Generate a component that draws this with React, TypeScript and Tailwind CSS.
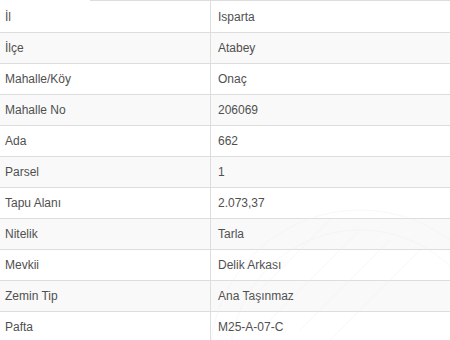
import React from "react";

const rows: [string, string][] = [
  ["İl", "Isparta"],
  ["İlçe", "Atabey"],
  ["Mahalle/Köy", "Onaç"],
  ["Mahalle No", "206069"],
  ["Ada", "662"],
  ["Parsel", "1"],
  ["Tapu Alanı", "2.073,37"],
  ["Nitelik", "Tarla"],
  ["Mevkii", "Delik Arkası"],
  ["Zemin Tip", "Ana Taşınmaz"],
  ["Pafta", "M25-A-07-C"],
];

export default function App() {
  return (
    <div
      className="relative w-[450px] h-[340px] overflow-hidden bg-white text-[12px] text-[#505050]"
      style={{ fontFamily: '"Liberation Sans", Arial, sans-serif' }}
    >
      <div className="flex h-px">
        <div className="w-[90px] bg-white" />
        <div className="flex-1 bg-[#dddddd]" />
      </div>
      <div className="flex flex-col">
        {rows.map(([k, v], i) => (
          <div
            key={k}
            className={`flex border-b border-[#dddddd] ${i === 0 ? "h-[32px]" : "h-[31px]"} ${i % 2 === 1 ? "bg-[#f9f9f9]" : "bg-white"}`}
          >
            <div className="w-[211px] shrink-0 border-r border-[#dddddd] flex items-center pl-[5px]">
              {k}
            </div>
            <div className="flex-1 flex items-center pl-[7px]">{v}</div>
          </div>
        ))}
      </div>
      <svg
        className="absolute left-0 top-0 pointer-events-none"
        width="450"
        height="340"
        viewBox="0 0 450 340"
      >
        <g fill="none" stroke="#eeeeee" strokeWidth="0.7" opacity="0.5">
          <circle cx="360" cy="360" r="150" />
          <circle cx="360" cy="360" r="130" />
          <path d="M250 300 L330 220 M270 320 L360 230 M300 330 L390 240 M330 340 L420 250" />
        </g>
      </svg>
    </div>
  );
}
